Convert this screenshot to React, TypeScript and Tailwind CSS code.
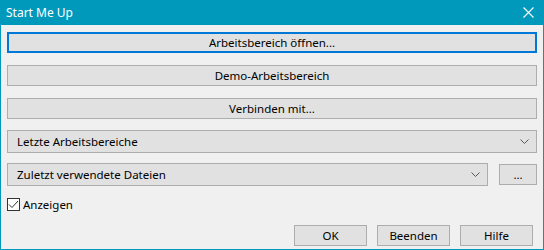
const font = { fontFamily: '"Segoe UI", "Noto Sans", "Open Sans", sans-serif' }

function DlgButton({
  label,
  className = '',
  focused = false,
}: {
  label: string
  className?: string
  focused?: boolean
}) {
  return (
    <div
      className={`flex items-center justify-center bg-[#e1e1e1] text-[11.5px] text-black ${
        focused ? 'border-2 border-[#0078d7]' : 'border border-[#adadad]'
      } ${className}`}
    >
      {label}
    </div>
  )
}

function Combo({ label, className = '' }: { label: string; className?: string }) {
  return (
    <div
      className={`flex items-center justify-between h-[23px] bg-[#e1e1e1] border border-[#adadad] pl-[9px] pr-[7px] text-[11.5px] text-black ${className}`}
    >
      <span>{label}</span>
      <svg width="9" height="5" viewBox="0 0 9 5" className="text-[#555]">
        <path d="M0.5 0.5 L4.5 4.5 L8.5 0.5" fill="none" stroke="currentColor" strokeWidth="1" />
      </svg>
    </div>
  )
}

export default function App() {
  return (
    <div
      className="w-[544px] h-[250px] flex flex-col border border-[#0099bc] border-t-0 bg-[#f0f0f0]"
      style={font}
    >
      {/* Title bar */}
      <div className="h-[25px] -mx-px bg-[#0099bc] flex items-center justify-between pl-[6px] pr-[10px] text-white text-[12px]">
        <span>Start Me Up</span>
        <svg width="11" height="11" viewBox="0 0 11 11">
          <path d="M0.5 0.5 L10.5 10.5 M10.5 0.5 L0.5 10.5" stroke="white" strokeWidth="1.1" />
        </svg>
      </div>

      <div className="flex flex-col px-[6px]">
        <DlgButton label="Arbeitsbereich öffnen..." focused className="mt-[7px] h-[21px]" />
        <DlgButton label="Demo-Arbeitsbereich" className="mt-[12px] h-[21px]" />
        <DlgButton label="Verbinden mit..." className="mt-[12px] h-[21px]" />
        <Combo label="Letzte Arbeitsbereiche" className="mt-[11px]" />
        <div className="mt-[10px] flex items-center gap-[11px]">
          <Combo label="Zuletzt verwendete Dateien" className="flex-1" />
          <DlgButton label="..." className="w-[38px] h-[21px]" />
        </div>
        <div className="mt-[10px] flex items-center gap-[3px] text-[11.5px] text-black">
          <div className="w-[13px] h-[13px] border border-[#333] bg-white flex items-center justify-center">
            <svg width="11" height="9" viewBox="0 0 11 9">
              <path d="M1 4.5 L4 7.5 L10 1" fill="none" stroke="#333" strokeWidth="1" />
            </svg>
          </div>
          <span>Anzeigen</span>
        </div>
        <div className="mt-[12px] flex justify-end gap-[10px] pr-[4px]">
          <DlgButton label="OK" className="w-[73px] h-[21px]" />
          <DlgButton label="Beenden" className="w-[73px] h-[21px]" />
          <DlgButton label="Hilfe" className="w-[73px] h-[21px]" />
        </div>
      </div>
    </div>
  )
}
